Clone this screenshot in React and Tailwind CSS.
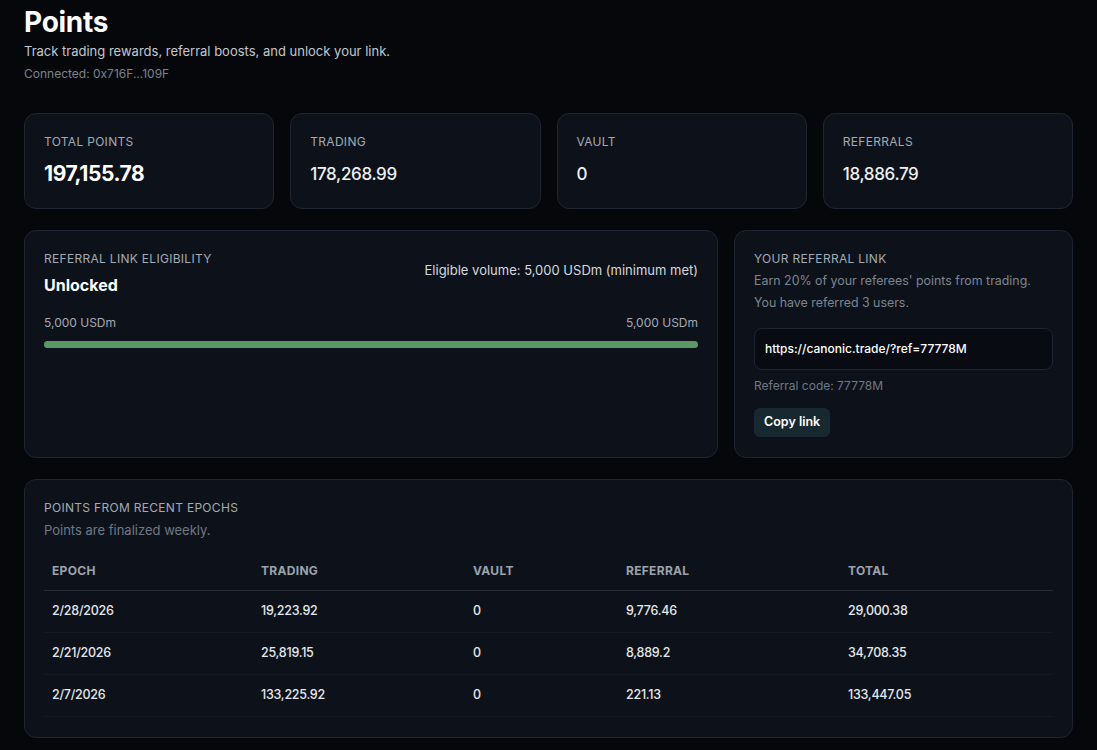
import React from "react";

const stats = [
  { label: "TOTAL POINTS", value: "197,155.78", big: true },
  { label: "TRADING", value: "178,268.99" },
  { label: "VAULT", value: "0" },
  { label: "REFERRALS", value: "18,886.79" },
];

const rows = [
  ["2/28/2026", "19,223.92", "0", "9,776.46", "29,000.38"],
  ["2/21/2026", "25,819.15", "0", "8,889.2", "34,708.35"],
  ["2/7/2026", "133,225.92", "0", "221.13", "133,447.05"],
];

const cols = ["w-[209px]", "w-[212px]", "w-[153px]", "w-[222px]", ""];

export default function App() {
  return (
    <div
      className="min-h-[750px] w-full bg-[#05070a] px-6 pb-6 pt-1 text-white"
      style={{ fontFamily: "Inter, 'Noto Sans', sans-serif" }}
    >
      <h1 className="text-[28px] font-bold leading-9 tracking-[-0.01em] text-white">Points</h1>
      <p className="mt-[1px] text-[13px] leading-5 text-[#c3c8cf]">
        Track trading rewards, referral boosts, and unlock your link.
      </p>
      <p className="mt-[5px] text-[12px] leading-4 text-[#7c838e]">Connected: 0x716F...109F</p>

      <div className="mt-[31px] grid grid-cols-4 gap-4">
        {stats.map((s) => (
          <div
            key={s.label}
            className="h-[96px] rounded-xl border border-[#1e2531] bg-[#0d121a] px-[19px] pt-5"
          >
            <div className="text-[12px] leading-4 tracking-wide text-[#a3aab5]">{s.label}</div>
            <div
              className={
                s.big
                  ? "mt-[10px] text-[21px] font-bold leading-7 tracking-[-0.02em] text-white"
                  : "mt-[10px] text-[17px] font-medium leading-7 tracking-[-0.02em] text-[#eef0f3]"
              }
            >
              {s.value}
            </div>
          </div>
        ))}
      </div>

      <div className="mt-[21px] grid grid-cols-3 gap-4">
        <div className="col-span-2 rounded-xl border border-[#1e2531] bg-[#0d121a] px-[19px] py-5">
          <div className="flex items-start justify-between">
            <div>
              <div className="text-[12px] leading-4 tracking-wide text-[#a3aab5]">
                REFERRAL LINK ELIGIBILITY
              </div>
              <div className="mt-[6px] text-[16px] font-bold leading-6 text-white">Unlocked</div>
            </div>
            <div className="mt-[9px] text-[13px] leading-5 text-[#d5d9de]">
              Eligible volume: 5,000 USDm (minimum met)
            </div>
          </div>
          <div className="mt-[18px] flex justify-between text-[12px] leading-4 text-[#a3aab5]">
            <span>5,000 USDm</span>
            <span>5,000 USDm</span>
          </div>
          <div className="mt-[10px] h-[7px] w-full rounded-full bg-[#1c232d]">
            <div className="h-full w-full rounded-full bg-[#5b9865]" />
          </div>
        </div>

        <div className="rounded-xl border border-[#1e2531] bg-[#0d121a] px-[19px] py-5">
          <div className="text-[12px] leading-4 tracking-wide text-[#a3aab5]">YOUR REFERRAL LINK</div>
          <div className="mt-[3px] text-[12.4px] leading-[22px] text-[#7c8591]">
            Earn 20% of your referees' points from trading.
          </div>
          <div className="text-[12.4px] leading-[22px] text-[#7c8591]">You have referred 3 users.</div>
          <div className="mt-[14px] flex h-[42px] items-center rounded-lg border border-[#1e2531] bg-[#080b11] px-[10px] text-[12px] font-medium text-white">
            https://canonic.trade/?ref=77778M
          </div>
          <div className="mt-2 text-[12px] leading-4 text-[#6f7884]">Referral code: 77778M</div>
          <button className="mt-[14px] h-[29px] rounded-md bg-[#172830] px-[10px] text-[12.5px] font-semibold text-white">
            Copy link
          </button>
        </div>
      </div>

      <div className="mt-[21px] rounded-xl border border-[#1e2531] bg-[#0d121a] px-[19px] pb-5 pt-5">
        <div className="text-[12px] leading-4 tracking-wide text-[#a3aab5]">POINTS FROM RECENT EPOCHS</div>
        <div className="mt-1 text-[13px] leading-5 text-[#6f7884]">Points are finalized weekly.</div>
        <table className="mt-3 w-full border-collapse text-left">
          <thead>
            <tr className="h-[38px] border-b border-[#252c37]">
              {["EPOCH", "TRADING", "VAULT", "REFERRAL", "TOTAL"].map((h, i) => (
                <th
                  key={h}
                  className={`${cols[i]} px-2 text-[12px] font-bold tracking-wide text-[#9aa3ae]`}
                >
                  {h}
                </th>
              ))}
            </tr>
          </thead>
          <tbody>
            {rows.map((r) => (
              <tr key={r[0]} className="h-[42px] border-b border-[#131922]">
                {r.map((c, i) => (
                  <td key={i} className="px-2 text-[12.5px] font-medium tracking-[-0.02em] text-[#e4e7eb]">
                    {c}
                  </td>
                ))}
              </tr>
            ))}
          </tbody>
        </table>
      </div>
    </div>
  );
}
